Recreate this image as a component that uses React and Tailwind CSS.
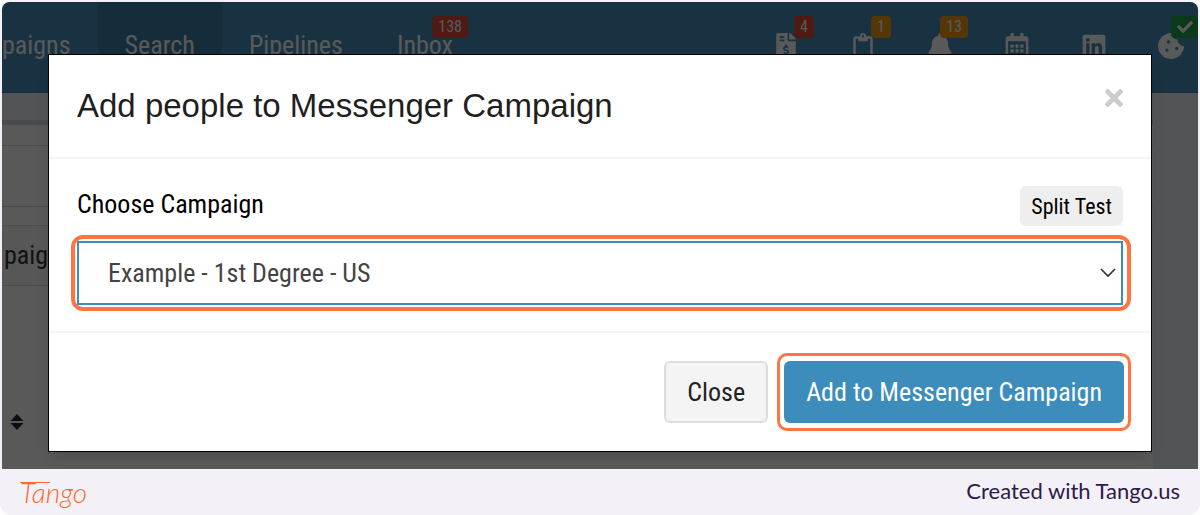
import {
  FaFileInvoiceDollar,
  FaRegClipboard,
  FaBell,
  FaRegCalendarAlt,
  FaLinkedin,
  FaCookieBite,
  FaCheck,
  FaTimes,
} from "react-icons/fa";

const navItems = [
  { label: "paigns" },
  { label: "Search", active: true },
  { label: "Pipelines" },
  { label: "Inbox", badge: "138" },
];

const tools = [
  { name: "Invoices", Icon: FaFileInvoiceDollar, badge: "4", color: "bg-[#dd4b39]" },
  { name: "Tasks", Icon: FaRegClipboard, badge: "1", color: "bg-[#f39c12]" },
  { name: "Alerts", Icon: FaBell, badge: "13", color: "bg-[#f39c12]" },
  { name: "Calendar", Icon: FaRegCalendarAlt },
  { name: "LinkedIn", Icon: FaLinkedin },
  { name: "Cookies", Icon: FaCookieBite, badge: <FaCheck className="w-4 h-4" />, color: "bg-[#1fa64a]" },
];

const Navbar = () => (
  <header className="bg-[#4690bd] text-white h-[91px] flex justify-between">
    <nav className="flex text-[26px]">
      {navItems.map((item) => (
        <a
          key={item.label}
          href="#"
          className={`relative flex items-center pr-[27px] first:pl-0 pl-[27px] pb-1 ${item.active ? "bg-[#3e80a6]" : ""}`}
        >
          {item.label}
          {item.badge && (
            <span className="absolute top-[14px] right-3 bg-[#dd4b39] rounded px-[6px] text-base leading-[22px]">
              {item.badge}
            </span>
          )}
        </a>
      ))}
    </nav>
    <div className="flex items-center gap-[51px] pr-[14px] pb-1">
      {tools.map(({ name, Icon, badge, color }) => (
        <a key={name} href="#" aria-label={name} className="relative h-full flex items-center">
          <Icon className="w-auto h-[26px]" />
          {badge && (
            <span className={`absolute top-[14px] -right-[15px] rounded px-[6px] h-[22px] flex items-center text-base ${color}`}>
              {badge}
            </span>
          )}
        </a>
      ))}
    </div>
  </header>
);

const SortIcon = () => (
  <svg className="w-[14px] h-[18px]" viewBox="0 0 14 18" fill="#222b33">
    <path d="M7 1l6.500 7h-13zM7 17l6.500-7h-13z" />
  </svg>
);

const Background = () => (
  <div className="col-start-1 row-start-1 flex flex-col bg-[#ecf0f5]">
    <Navbar />
    <div className="mt-[27px] mr-[45px] flex-1 flex flex-col bg-white border-t-[5px] border-[#d2d6de]">
      <div className="h-[21px] border-b border-[#d2d6de]" />
      <div className="h-[61px] border-b border-[#c5d5e5]" />
      <div className="h-[19px] border-b border-[#ddd]" />
      <div className="h-[60px] border-b border-[#ddd] bg-[#f9f9f9] text-[#333] text-[26px] flex items-center pl-[2px]">
        paig
      </div>
      <div className="flex-1 pt-[127px] pl-[8px]">
        <SortIcon />
      </div>
    </div>
  </div>
);

const CampaignModal = () => (
  <div className="relative z-10 col-start-1 row-start-1 bg-black/65 pt-[53px] pb-[18px] px-[47px]">
    <div role="dialog" aria-labelledby="modal-title" className="bg-white text-[#1f1f1f] ring-1 ring-black shadow-lg">
      <div className="flex items-start justify-between px-7 pt-7 h-[104px] border-b-2 border-[#f4f4f4]">
        <h4 id="modal-title" className="font-['Liberation_Sans',sans-serif] text-[33px] leading-[46px]">
          Add people to Messenger Campaign
        </h4>
        <button type="button" aria-label="Close dialog" className="text-[#ccc] pt-[2px]">
          <FaTimes className="w-[18px] h-[26px]" />
        </button>
      </div>

      <div className="px-7 pt-[27px] pb-5">
        <div className="flex justify-between">
          <label htmlFor="campaign" className="text-[26px] leading-9 text-black">
            Choose Campaign
          </label>
          <button type="button" className="bg-[#eee] rounded-md h-10 px-[11px] text-[22px] text-black">
            Split Test
          </button>
        </div>
        <div className="relative mt-[9px] -ml-[6px] -mr-2 p-[2px] pr-1 border-4 border-[#ff7442] rounded-xl">
          <select
            id="campaign"
            className="appearance-none w-full h-16 pl-[29px] pr-10 border-2 border-[#3c8dbc] bg-white text-[#444] text-[26px] outline-none"
          >
            <option>Example - 1st Degree - US</option>
          </select>
          <svg
            className="absolute right-[11px] top-[28px] w-4 h-3 pointer-events-none"
            viewBox="0 0 16 12"
            fill="none"
            stroke="#333"
            strokeWidth="1.6"
          >
            <path d="M1 2l7 7 7-7" />
          </svg>
        </div>
      </div>

      <div className="flex justify-end items-center gap-[9px] px-7 py-5 border-t-2 border-[#f4f4f4]">
        <button
          type="button"
          className="h-[62px] px-[21px] bg-[#f4f4f4] border-2 border-[#ddd] rounded-md text-[26px] text-[#222]"
        >
          Close
        </button>
        <div className="-mr-2 py-[5px] px-1 border-[3px] border-[#ff7442] rounded-[10px]">
          <button type="button" className="block h-[62px] px-[22px] bg-[#3c8dbc] rounded-md text-[26px] text-white">
            Add to Messenger Campaign
          </button>
        </div>
      </div>
    </div>
  </div>
);

const Footer = () => (
  <footer className="flex items-center justify-between h-[46px] px-5 font-[Lato,sans-serif]">
    <div className="relative text-[#ff6a2b] text-[28px] leading-8 italic font-light">
      Tango
      <span className="absolute top-[6px] left-0 w-[30px] border-t border-[#ff6a2b]" />
    </div>
    <span className="text-[22px] leading-6 pb-[2px] text-[#2e1a47]">Created with Tango.us</span>
  </footer>
);

export default function App() {
  return (
    <div className="bg-[#f3f1f7] rounded-xl overflow-hidden font-['Roboto_Condensed',Roboto,sans-serif]">
      <main className="mx-[2px] mt-[2px] grid rounded-t-lg overflow-hidden">
        <Background />
        <CampaignModal />
      </main>
      <Footer />
    </div>
  );
}
